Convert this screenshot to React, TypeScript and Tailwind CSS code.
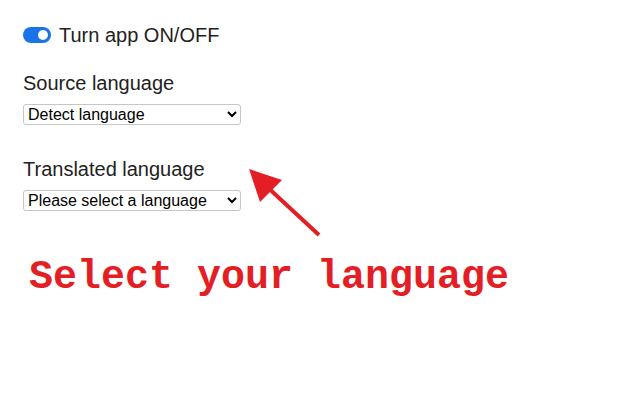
import { useState } from "react";

const LANGS = ["English", "Spanish", "French", "German", "Japanese", "Chinese"];

export default function App() {
  const [on, setOn] = useState(true);

  return (
    <div className="relative h-[400px] w-[640px] overflow-hidden bg-white font-['Liberation_Sans',Arial,sans-serif] text-[#222]">
      <div className="flex flex-col px-[23px] pt-[23px]">
        <label className="flex items-center gap-[8px] text-[20px] leading-[24px]">
          <button
            onClick={() => setOn(!on)}
            className={`flex h-[16px] w-[28px] items-center rounded-full px-[3px] ${on ? "justify-end bg-[#1a73e8]" : "justify-start bg-[#bbb]"}`}
          >
            <span className="h-[10px] w-[10px] rounded-full bg-white" />
          </button>
          Turn app ON/OFF
        </label>

        <div className="mt-[24px] text-[20px] leading-[24px]">Source language</div>
        <select className="mt-[9px] h-[21px] w-[218px] rounded-[3px] border border-[#c6c6c6] bg-white text-[16px] leading-[19px] text-black">
          <option>Detect language</option>
          {LANGS.map((l) => (
            <option key={l}>{l}</option>
          ))}
        </select>

        <div className="mt-[32px] text-[20px] leading-[24px]">Translated language</div>
        <select className="mt-[9px] h-[21px] w-[218px] rounded-[3px] border border-[#c6c6c6] bg-white text-[16px] leading-[19px] text-black">
          <option>Please select a language</option>
          {LANGS.map((l) => (
            <option key={l}>{l}</option>
          ))}
        </select>

        <div className="mt-[43px] pl-[6px] font-['Liberation_Mono',monospace] text-[40px] font-bold leading-[48px] text-[#e31e24]">
          Select your language
        </div>
      </div>

      <svg className="absolute left-[240px] top-[160px]" width="90" height="85" viewBox="0 0 90 85">
        <line x1="79" y1="75" x2="24" y2="24" stroke="#e31e24" strokeWidth="4" />
        <polygon points="9,9 42,20 20,42" fill="#e31e24" />
      </svg>
    </div>
  );
}
